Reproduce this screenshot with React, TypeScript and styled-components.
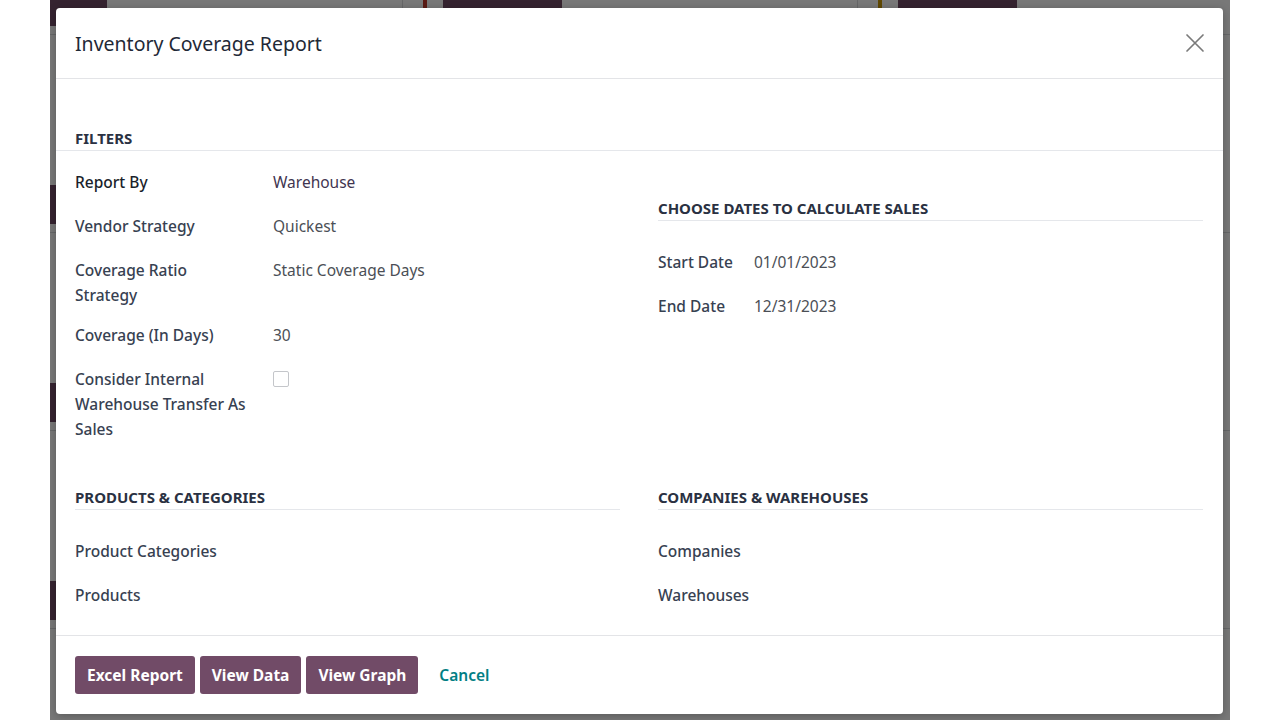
import React from 'react';
import styled, { createGlobalStyle } from 'styled-components';

const Global = createGlobalStyle`
  html, body { margin: 0; padding: 0; background: #fff; }
  body { font-family: "Noto Sans", "Open Sans", sans-serif; -webkit-font-smoothing: antialiased; }
  * { box-sizing: border-box; }
`;

const Screen = styled.div`
  width: 1280px;
  height: 720px;
  display: flex;
  justify-content: center;
  background: #fff;
  overflow: hidden;
`;

const Frame = styled.div`
  position: relative;
  width: 1180px;
  height: 720px;
  overflow: hidden;
  background: #fff;
`;

/* ---------- page behind the dialog ---------- */
const Kanban = styled.div`
  display: flex;
  margin-left: -103px;
  margin-top: -163px;
`;

const KColumn = styled.div`
  width: 455px;
  flex: none;
  border-left: 1px solid #d8dadd;
  display: flex;
  flex-direction: column;
`;

const KCard = styled.div<{ $bar: string }>`
  height: 198px;
  background: #fff;
  border-bottom: 1px solid #d8dadd;
  border-left: 4px solid ${(p) => p.$bar};
  margin-left: 20px;
  padding: 150px 16px 0 16px;
`;

const KFooter = styled.div`
  display: flex;
  align-items: flex-end;
  gap: 100px;
`;

const KText = styled.div`
  font-size: 15px;
  line-height: 18px;
  color: #017e84;
`;

const KPill = styled.div`
  width: 119px;
  height: 39px;
  flex: none;
  border-radius: 6px;
  background: #714b67;
`;

const Overlay = styled.div`
  position: absolute;
  inset: 0;
  background: rgba(0, 0, 0, 0.53);
`;

/* ---------- dialog ---------- */
const Dialog = styled.div`
  position: absolute;
  left: 6px;
  top: 8px;
  width: 1167px;
  height: 706px;
  background: #fff;
  border-radius: 4px;
  box-shadow: 0 2px 8px rgba(0, 0, 0, 0.25);
  display: flex;
  flex-direction: column;
  color: #374151;
`;

const Header = styled.div`
  height: 71px;
  flex: none;
  display: flex;
  align-items: center;
  justify-content: space-between;
  padding: 0 19px;
  border-bottom: 1px solid #e3e4e7;
`;

const Title = styled.h4`
  margin: 0;
  font-size: 19.5px;
  font-weight: 400;
  color: #1f2937;
`;

const CloseButton = styled.button`
  border: 0;
  background: none;
  padding: 0;
  width: 22px;
  height: 22px;
  display: flex;
  align-items: center;
  justify-content: center;
  margin-right: -2px;
  color: #7a7a7a;
  cursor: pointer;
`;

const Body = styled.div`
  flex: 1;
  padding-top: 49px;
`;

const SectionTitle = styled.div<{ $full?: boolean }>`
  font-size: 15px;
  line-height: 20px;
  font-weight: 700;
  text-transform: uppercase;
  color: #2a3142;
  padding: 0 ${(p) => (p.$full ? '19px' : '0')} 2px;
  border-bottom: 1px solid #e5e7eb;
`;

const Columns = styled.div`
  display: grid;
  grid-template-columns: 545px 545px;
  column-gap: 38px;
  padding: 0 19px;
`;

const FilterColumns = styled(Columns)`
  margin-top: 19px;
`;

const BottomColumns = styled(Columns)`
  margin-top: 30px;
`;

const Group = styled.div<{ $top?: number }>`
  padding-top: ${(p) => p.$top ?? 0}px;
`;

const Fields = styled.div<{ $gap?: number }>`
  margin-top: ${(p) => p.$gap ?? 0}px;
`;

const Row = styled.div<{ $label: number }>`
  display: grid;
  grid-template-columns: ${(p) => p.$label}px 1fr;
  align-items: start;
  min-height: 29px;
  margin-bottom: 15px;
  font-size: 15.5px;
  line-height: 25px;
`;

const Label = styled.div<{ $strong?: boolean; $pad?: number }>`
  color: ${(p) => (p.$strong ? '#1a1f2b' : '#374151')};
  font-weight: 500;
  padding-right: ${(p) => p.$pad ?? 24}px;
  white-space: ${(p) => (p.$pad !== undefined ? 'nowrap' : 'normal')};
`;

const Value = styled.div<{ $tone?: string }>`
  color: ${(p) => p.$tone ?? '#4b4f56'};
`;

const Checkbox = styled.span`
  display: inline-block;
  width: 16px;
  height: 16px;
  margin-top: 4px;
  border: 1px solid #c4c6ca;
  border-radius: 2px;
  background: #fff;
`;

const Footer = styled.div`
  height: 79px;
  flex: none;
  border-top: 1px solid #e3e4e7;
  display: flex;
  align-items: flex-start;
  padding: 20px 19px 0;
  gap: 5px;
`;

const PrimaryButton = styled.button`
  height: 38px;
  padding: 0 12px;
  border: 0;
  border-radius: 3px;
  background: #714b67;
  color: #fff;
  font-family: inherit;
  font-size: 15.5px;
  font-weight: 700;
  cursor: pointer;
`;

const LinkButton = styled.button`
  height: 38px;
  padding: 0 13px;
  margin-left: 3px;
  border: 0;
  background: none;
  color: #017e84;
  font-family: inherit;
  font-size: 15.5px;
  font-weight: 600;
  cursor: pointer;
`;

const filters: { label: string; value?: string; check?: boolean; strong?: boolean; tone?: string }[] = [
  { label: 'Report By', value: 'Warehouse', strong: true, tone: '#3f3550' },
  { label: 'Vendor Strategy', value: 'Quickest' },
  { label: 'Coverage Ratio Strategy', value: 'Static Coverage Days' },
  { label: 'Coverage (In Days)', value: '30' },
  { label: 'Consider Internal Warehouse Transfer As Sales', check: true },
];

const columns = [
  { bar: '#d9d9d9', note: '1 Late' },
  { bar: '#c0392b', note: '' },
  { bar: '#c99a06', note: '' },
];

export default function App() {
  return (
    <Screen>
      <Global />
      <Frame>
        <Kanban>
          {columns.map((c, i) => (
            <KColumn key={i}>
              {[0, 1, 2, 3].map((k) => (
                <KCard key={k} $bar={c.bar}>
                  <KFooter>
                    <KPill />
                    {k === 0 && c.note ? <KText>{c.note}</KText> : null}
                  </KFooter>
                </KCard>
              ))}
            </KColumn>
          ))}
        </Kanban>
        <Overlay />
        <Dialog role="dialog" aria-label="Inventory Coverage Report">
          <Header>
            <Title>Inventory Coverage Report</Title>
            <CloseButton aria-label="Close">
              <svg width="20" height="20" viewBox="0 0 20 20" fill="none" stroke="currentColor" strokeWidth="1.7" strokeLinecap="round">
                <path d="M2 2 L18 18 M18 2 L2 18" />
              </svg>
            </CloseButton>
          </Header>
          <Body>
            <SectionTitle $full>Filters</SectionTitle>
            <FilterColumns>
              <Group>
                {filters.map((f) => (
                  <Row key={f.label} $label={198}>
                    <Label $strong={f.strong}>{f.label}</Label>
                    {f.check ? <div><Checkbox /></div> : <Value $tone={f.tone}>{f.value}</Value>}
                  </Row>
                ))}
              </Group>
              <Group $top={28}>
                <SectionTitle>Choose dates to calculate sales</SectionTitle>
                <Fields $gap={29}>
                  <Row $label={96}>
                    <Label $pad={8}>Start Date</Label>
                    <Value>01/01/2023</Value>
                  </Row>
                  <Row $label={96}>
                    <Label $pad={8}>End Date</Label>
                    <Value>12/31/2023</Value>
                  </Row>
                </Fields>
              </Group>
            </FilterColumns>
            <BottomColumns>
              <Group>
                <SectionTitle>Products &amp; Categories</SectionTitle>
                <Fields $gap={29}>
                  <Row $label={198}><Label>Product Categories</Label><Value /></Row>
                  <Row $label={198}><Label>Products</Label><Value /></Row>
                </Fields>
              </Group>
              <Group>
                <SectionTitle>Companies &amp; Warehouses</SectionTitle>
                <Fields $gap={29}>
                  <Row $label={198}><Label>Companies</Label><Value /></Row>
                  <Row $label={198}><Label>Warehouses</Label><Value /></Row>
                </Fields>
              </Group>
            </BottomColumns>
          </Body>
          <Footer>
            <PrimaryButton>Excel Report</PrimaryButton>
            <PrimaryButton>View Data</PrimaryButton>
            <PrimaryButton>View Graph</PrimaryButton>
            <LinkButton>Cancel</LinkButton>
          </Footer>
        </Dialog>
      </Frame>
    </Screen>
  );
}
